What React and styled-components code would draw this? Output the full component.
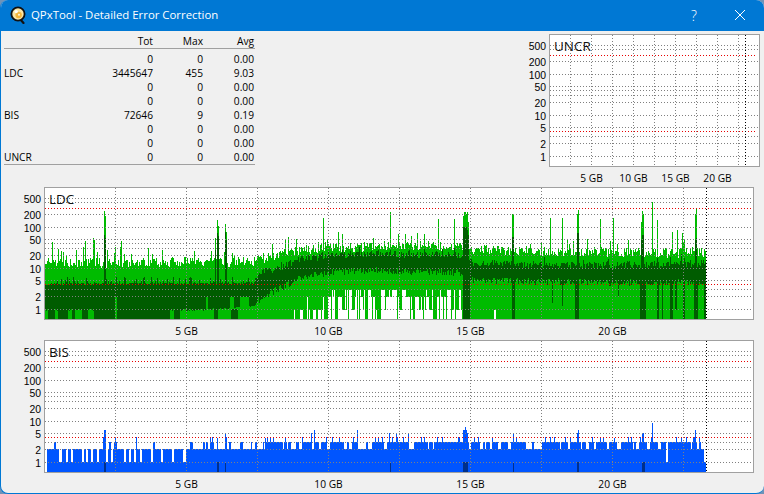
import React from 'react';
import styled, { createGlobalStyle } from 'styled-components';

const GlobalStyle = createGlobalStyle`
  html, body {
    margin: 0;
    padding: 0;
    background: #6f93b8;
  }
`;

const uiFont = `"Open Sans", "Noto Sans", sans-serif`;

// pixel rows of the log scale, from the top of the plot's inner area
const SCALE = [
  [500, 10], [400, 14], [300, 20], [200, 26], [100, 39], [50, 51], [40, 55], [30, 60],
  [20, 67], [10, 80], [5, 92], [4, 96], [3, 101], [2, 108], [1, 121],
];
const LABELLED = [500, 200, 100, 50, 20, 10, 5, 2, 1];
const RED = [300, 4];
const rowOf = (value) => SCALE.find(([v]) => v === value)[1];

const mulberry = (seed) => () => {
  seed = (seed + 0x6d2b79f5) | 0;
  let t = Math.imul(seed ^ (seed >>> 15), 1 | seed);
  t = (t + Math.imul(t ^ (t >>> 7), 61 | t)) ^ t;
  return ((t ^ (t >>> 14)) >>> 0) / 4294967296;
};

const lerp = (points, x) => {
  for (let i = 1; i < points.length; i++) {
    if (x <= points[i][0]) {
      const [x0, y0] = points[i - 1];
      const [x1, y1] = points[i];
      return y0 + ((y1 - y0) * (x - x0)) / (x1 - x0);
    }
  }
  return points[points.length - 1][1];
};

const inRuns = (runs, x) => runs.some(([a, b]) => x >= a && x <= b);

const bar = (x, y0, y1) => `M${x + 0.5} ${y0}V${y1}`;

// LDC trace, worked out in window pixels then moved into the plot
const buildLdc = () => {
  const rnd = mulberry(4711);
  const floorRnd = mulberry(20831);
  const topEnv = [[45, 263], [255, 262], [270, 256], [300, 250], [380, 246], [460, 246], [475, 250], [600, 252], [705, 253]];
  const darkTopEnv = [[45, 285], [255, 284], [258, 277], [275, 273], [300, 263], [330, 259], [380, 257], [460, 259], [475, 267], [600, 269], [705, 267]];
  const darkBotEnv = [[45, 309], [200, 309], [255, 305], [258, 297], [266, 291], [290, 280], [300, 274], [330, 269], [380, 267], [460, 269], [475, 277], [600, 279], [705, 278]];
  const lowLight = [[45, 47], [55, 57], [68, 71], [75, 81], [88, 93], [115, 116], [170, 173], [180, 192], [193, 213], [218, 230], [238, 290]];
  const midLight = [[115, 116], [206, 207], [230, 233], [240, 248]];
  const spikes = [
    [52, 242], [85, 241], [93, 238], [94, 240], [104, 211, 235], [105, 216, 238], [115, 247], [121, 241], [215, 238, 250], [217, 220, 233],
    [218, 226, 236], [225, 224, 232], [226, 232, 240], [323, 218], [338, 232], [390, 212, 250], [417, 233], [438, 219], [454, 219],
    [463, 216, 227], [464, 212, 227], [465, 212, 227], [466, 214, 227], [467, 212, 230], [468, 222, 235], [512, 214, 237], [513, 214, 237],
    [550, 218], [562, 218], [577, 214, 233], [578, 210, 233], [600, 219], [613, 218], [628, 240], [641, 222, 240], [642, 211, 235],
    [643, 214, 235], [652, 202], [657, 220], [672, 232], [677, 230], [682, 233], [695, 214, 240], [696, 208, 238],
  ];
  const needles = [[463, 469, 319], [512, 514, 319], [552, 552, 303], [562, 562, 306], [575, 578, 319], [618, 618, 297], [640, 645, 319], [657, 658, 319], [662, 662, 319], [670, 672, 319], [675, 676, 310], [683, 684, 319], [694, 697, 319], [704, 705, 319]];

  let light = '';
  let dark = '';
  let runLeft = 0;
  let floor = 319;

  for (let x = 45; x <= 705; x++) {
    const spike = spikes.find((s) => s[0] === x);
    const teeth = x < 258 ? 0.25 : 0.08;
    let top = lerp(topEnv, x) + 5 - rnd() * 10 - (rnd() < 0.14 ? rnd() * 16 : 0);
    let darkTop = lerp(darkTopEnv, x) - rnd() * (x < 258 ? 2 : 7) - (rnd() < teeth ? rnd() * 7 : 0);
    let darkBot = lerp(darkBotEnv, x) + rnd() * (x < 258 ? 2 : 7);
    if (spike) {
      top = spike[1];
      if (spike[2]) darkTop = spike[2];
    }

    if (runLeft-- <= 0) {
      runLeft = floorRnd() < 0.55 ? 0 : Math.floor(floorRnd() * 3);
      const r = floorRnd();
      floor = 319;
      if (x >= 288 && x < 300) floor = r < 0.3 ? 310 : 319;
      else if (x >= 300 && x < 330) floor = r < 0.2 ? 297 : r < 0.55 ? 310 : 319;
      else if (x >= 330 && x < 462) floor = r < 0.22 ? 290 : r < 0.5 ? 297 : r < 0.68 ? 310 : 319;
      else if (x >= 470 && x < 512) floor = r < 0.1 ? 310 : 319;
    }

    if (inRuns(midLight, x)) darkBot = 297;
    const needle = needles.find(([a, b]) => x >= a && x <= b);
    if (needle) darkBot = Math.max(darkBot, needle[2]);
    const lightFloor = needle ? 319 : floor;

    light += bar(x - 45, Math.round(top) - 188, lightFloor - 188);
    dark += bar(x - 45, Math.round(darkTop) - 188, Math.round(darkBot) - 188);
    if (x < 258 && !inRuns(lowLight, x)) dark += bar(x - 45, 121, 131);
  }
  return { light, dark };
};

const buildBis = () => {
  const rnd = mulberry(99);
  const gaps = [[59, 61], [66, 67], [71, 72], [82, 83], [86, 87], [91, 92], [97, 98], [106, 107], [111, 112], [124, 125], [129, 130], [134, 135], [140, 141], [151, 152], [161, 162], [172, 173], [183, 185], [666, 667], [704, 705]];
  const spikes = [
    [103, 437], [104, 430], [105, 430], [210, 438], [217, 438], [225, 433], [265, 438], [311, 433], [314, 430], [357, 430], [389, 433], [396, 433],
    [408, 433], [463, 430], [464, 430], [465, 427], [466, 430], [467, 433], [513, 433], [577, 433], [578, 430], [600, 438], [614, 438], [642, 433],
    [643, 433], [652, 423], [695, 430], [694, 437],
  ];
  const deep = [[104, 105], [217, 218], [225, 225], [390, 390], [463, 467], [513, 513], [577, 578], [642, 644]];
  const density = [[47, 0.1], [186, 0.1], [188, 0.35], [260, 0.45], [270, 0.7], [700, 0.7]];

  let blue = '';
  let navy = '';
  let runLeft = 0;
  let on = false;
  for (let x = 47; x <= 705; x++) {
    if (runLeft-- <= 0) {
      runLeft = Math.floor(rnd() * 3);
      on = rnd() < lerp(density, x);
    }
    const spike = spikes.find((s) => s[0] === x);
    let top = inRuns(gaps, x) ? 462 : 449;
    if (top === 449 && on) top = rnd() < 0.12 ? 437 : 442;
    if (spike) top = spike[1];
    blue += bar(x - 45, top - 341, 131);
    if (inRuns(deep, x)) navy += bar(x - 45, 121, 131);
  }
  return { blue, navy };
};

const ldc = buildLdc();
const bis = buildBis();

const Window = styled.div`
  width: 764px;
  height: 494px;
  box-sizing: border-box;
  display: flex;
  flex-direction: column;
  overflow: hidden;
  background: #f0f0f0;
  border-left: 1px solid #0078d4;
  border-bottom: 1px solid #0078d4;
  border-radius: 8px;
  font-family: ${uiFont};
  color: #000;
`;

const TitleBar = styled.div`
  height: 31px;
  flex: none;
  display: flex;
  align-items: center;
  background: #0078d4;
  color: #fff;
  padding: 0 1px 1px 9px;
  box-sizing: border-box;
`;

const TitleText = styled.span`
  margin-left: 5px;
  font-size: 11.4px;
  line-height: 16px;
`;

const CaptionButtons = styled.div`
  margin-left: auto;
  display: flex;
  align-items: center;
`;

const CaptionButton = styled.div`
  width: 46px;
  height: 30px;
  display: flex;
  align-items: center;
  justify-content: center;
  font-size: 14px;
  font-weight: 300;
  color: #fff;
`;

const Content = styled.div`
  flex: 1;
  display: flex;
  flex-direction: column;
  align-items: flex-start;
  padding: 3px 4px 0 0;
`;

const TopRow = styled.div`
  align-self: stretch;
  display: flex;
  justify-content: space-between;
`;

const Stats = styled.div`
  width: 251px;
  margin-left: 3px;
  font-size: 10.2px;
`;

const StatRow = styled.div`
  display: grid;
  grid-template-columns: 99px 50px 50px 51px;
  height: 14px;
  line-height: 14px;
  white-space: nowrap;
`;

const HeadRow = styled(StatRow)`
  box-sizing: content-box;
  border-bottom: 1px solid #a0a0a0;
`;

const StatBody = styled.div`
  padding-top: 3px;
  border-bottom: 1px solid #a0a0a0;
`;

const Cell = styled.span`
  text-align: ${(p) => (p.$label ? 'left' : 'right')};
`;

const PlotBox = styled.div`
  display: grid;
  grid-template-columns: 43px ${(p) => p.$width}px;
  grid-template-rows: 133px 20px;
`;

const YAxis = styled.div`
  position: relative;
`;

const YLabel = styled.span`
  position: absolute;
  right: 3px;
  transform: translateY(-50%);
  font-family: "Liberation Sans", Arial, sans-serif;
  font-size: 10.4px;
  line-height: 11px;
`;

const Frame = styled.div`
  position: relative;
  border: 1px solid #a0a0a0;
  background: #fff;
`;

const PlotName = styled.span`
  position: absolute;
  left: 4px;
  top: 2px;
  font-size: 13.5px;
  line-height: 18px;
  color: #111;
`;

const Canvas = styled.svg`
  display: block;
  shape-rendering: crispEdges;
`;

const XAxis = styled.div`
  grid-column: 2;
  position: relative;
`;

const XLabel = styled.span`
  position: absolute;
  top: 4px;
  transform: translateX(-50%);
  font-size: 10.2px;
  line-height: 14px;
  white-space: nowrap;
`;

const dots = { strokeWidth: 1, strokeDasharray: '1 2', fill: 'none' };

const Plot = ({ name, width, step, endLine, children }) => {
  const inner = width - 2;
  const verticals = [];
  for (let x = step - 1; x < inner - 6; x += step) verticals.push(x);
  const horizontal = SCALE.filter(([v]) => !RED.includes(v))
    .map(([, y]) => `M0 ${y + 0.5}H${inner}`)
    .join('');
  const red = RED.map((v) => `M0 ${rowOf(v) + 0.5}H${inner - 2}`).join('');
  const vertical = verticals.map((x) => `M${x + 0.5} 0V131`).join('');

  return (
    <PlotBox $width={width}>
      <YAxis>
        {LABELLED.map((v) => (
          <YLabel key={v} style={{ top: rowOf(v) + 2 }}>{v}</YLabel>
        ))}
      </YAxis>
      <Frame>
        <Canvas width={inner} height={131}>
          {children}
          <path d={horizontal} stroke="#808080" {...dots} />
          <path d={vertical} stroke="#808080" {...dots} />
          <path d={red} stroke="#e80000" {...dots} />
          <path d={`M${endLine + 0.5} 0V131`} stroke="#000" {...dots} />
        </Canvas>
        <PlotName>{name}</PlotName>
      </Frame>
      <XAxis>
        {[5, 10, 15, 20].map((gb, i) => (
          <XLabel key={gb} style={{ left: (i + 1) * 2 * step + 0.5 }}>{gb} GB</XLabel>
        ))}
      </XAxis>
    </PlotBox>
  );
};

const AppIcon = () => (
  <svg width="16" height="18" viewBox="0 0 16 18">
    <path d="M10 13l3.5 4" stroke="#111" strokeWidth="2.2" strokeLinecap="round" />
    <circle cx="8" cy="8" r="6.6" fill="#fbe6a6" stroke="#111" strokeWidth="1.8" />
    <circle cx="8.6" cy="9" r="3.2" fill="#f6b73c" />
    <circle cx="6.2" cy="5.6" r="1.7" fill="#fff" />
    <circle cx="9" cy="8.8" r="1" fill="#fff8e0" />
  </svg>
);

const rows = [
  ['', 0, 0, '0.00'],
  ['LDC', 3445647, 455, '9.03'],
  ['', 0, 0, '0.00'],
  ['', 0, 0, '0.00'],
  ['BIS', 72646, 9, '0.19'],
  ['', 0, 0, '0.00'],
  ['', 0, 0, '0.00'],
  ['UNCR', 0, 0, '0.00'],
];

export default function App() {
  return (
    <>
      <GlobalStyle />
      <Window>
        <TitleBar>
          <AppIcon />
          <TitleText>QPxTool - Detailed Error Correction</TitleText>
          <CaptionButtons>
            <CaptionButton>?</CaptionButton>
            <CaptionButton>
              <svg width="12" height="12" viewBox="0 0 12 12">
                <path d="M1 1l10 10M11 1L1 11" stroke="#fff" strokeWidth="1" fill="none" />
              </svg>
            </CaptionButton>
          </CaptionButtons>
        </TitleBar>
        <Content>
          <TopRow>
            <Stats>
              <HeadRow>
                <Cell $label />
                <Cell>Tot</Cell>
                <Cell>Max</Cell>
                <Cell>Avg</Cell>
              </HeadRow>
              <StatBody>
                {rows.map(([label, tot, max, avg], i) => (
                  <StatRow key={i}>
                    <Cell $label>{label}</Cell>
                    <Cell>{tot}</Cell>
                    <Cell>{max}</Cell>
                    <Cell>{avg}</Cell>
                  </StatRow>
                ))}
              </StatBody>
            </Stats>
            <Plot name="UNCR" width={211} step={21} endLine={195} />
          </TopRow>
          <Plot name="LDC" width={710} step={71} endLine={661}>
            <path d={ldc.light} stroke="#00bb00" fill="none" />
            <path d={ldc.dark} stroke="#005c00" fill="none" />
          </Plot>
          <Plot name="BIS" width={710} step={71} endLine={661}>
            <path d={bis.blue} stroke="#0055ff" fill="none" />
            <path d={bis.navy} stroke="#00308c" fill="none" />
          </Plot>
        </Content>
      </Window>
    </>
  );
}
